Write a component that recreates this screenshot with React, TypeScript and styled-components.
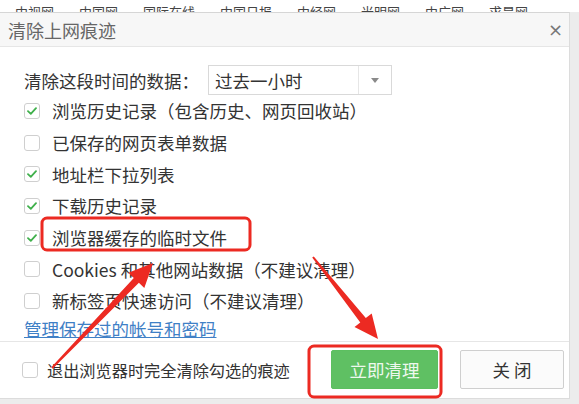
import React from "react";
import styled, { createGlobalStyle } from "styled-components";

const CJK = `"Noto Sans CJK SC", "Noto Sans", sans-serif`;

const GlobalStyle = createGlobalStyle`
  html, body {
    margin: 0;
    padding: 0;
    background: #ececec;
    font-family: ${CJK};
  }
`;

const navLinks = ["中视网", "中国网", "国际在线", "中国日报", "中经网", "光明网", "中广网", "求是网"];

const options = [
  { label: "浏览历史记录（包含历史、网页回收站）", checked: true },
  { label: "已保存的网页表单数据", checked: false },
  { label: "地址栏下拉列表", checked: true },
  { label: "下载历史记录", checked: true },
  { label: "浏览器缓存的临时文件", checked: true },
  { label: "Cookies 和其他网站数据（不建议清理）", checked: false },
  { label: "新标签页快速访问（不建议清理）", checked: false },
];

// polygon for a tapered annotation arrow from tail to tip
const arrowPoints = (tx: number, ty: number, px: number, py: number) => {
  const dx = px - tx;
  const dy = py - ty;
  const len = Math.hypot(dx, dy);
  const ux = dx / len;
  const uy = dy / len;
  const nx = -uy;
  const ny = ux;
  const headLen = 24;
  const headW = 11;
  const bx = px - ux * headLen;
  const by = py - uy * headLen;
  const pts = [
    [tx + nx * 1, ty + ny * 1],
    [bx + nx * 3.5, by + ny * 3.5],
    [bx + nx * headW, by + ny * headW],
    [px, py],
    [bx - nx * headW, by - ny * headW],
    [bx - nx * 3.5, by - ny * 3.5],
    [tx - nx * 1, ty - ny * 1],
  ];
  return pts.map(([x, y]) => `${x.toFixed(1)},${y.toFixed(1)}`).join(" ");
};

const CheckMark = () => (
  <svg width="10" height="8" viewBox="0 0 10 8">
    <path d="M1 4.2 L3.8 6.8 L9 1.2" fill="none" stroke="#3fb04b" strokeWidth="1.8" strokeLinecap="round" strokeLinejoin="round" />
  </svg>
);

const Checkbox = ({ checked }: { checked: boolean }) => (
  <Box>{checked && <CheckMark />}</Box>
);

const App = () => {
  return (
    <>
      <GlobalStyle />
      <Page>
        <NavStrip>
          {navLinks.map((n) => (
            <NavLink key={n}>{n}</NavLink>
          ))}
        </NavStrip>
        <Dialog>
          <Header>
            <Title>清除上网痕迹</Title>
            <Close>×</Close>
          </Header>
          <Body>
            <RangeRow>
              <span>清除这段时间的数据：</span>
              <Select>
                <SelectValue>过去一小时</SelectValue>
                <SelectArrow>
                  <svg width="8" height="5" viewBox="0 0 8 5">
                    <path d="M0 0 H8 L4 5 Z" fill="#8a8a8a" />
                  </svg>
                </SelectArrow>
              </Select>
            </RangeRow>
            {options.map((o) => (
              <OptionRow key={o.label}>
                <Checkbox checked={o.checked} />
                <span>{o.label}</span>
              </OptionRow>
            ))}
            <LinkRow>
              <Link href="#">管理保存过的帐号和密码</Link>
            </LinkRow>
          </Body>
          <Footer>
            <ExitOption>
              <Checkbox checked={false} />
              <span>退出浏览器时完全清除勾选的痕迹</span>
            </ExitOption>
            <Buttons>
              <Button $primary>立即清理</Button>
              <Button>关 闭</Button>
            </Buttons>
          </Footer>
        </Dialog>
        <Annotations width="579" height="404" viewBox="0 0 579 404">
          <rect x="42" y="218" width="208" height="32" rx="5" fill="none" stroke="#ec2a22" strokeWidth="3" />
          <rect x="309" y="346" width="132" height="51" rx="5" fill="none" stroke="#ec2a22" strokeWidth="3" />
          <polygon points={arrowPoints(52, 368, 153, 263)} fill="#ec2a22" />
          <polygon points={arrowPoints(313, 257, 378, 339)} fill="#ec2a22" />
        </Annotations>
      </Page>
    </>
  );
};

export default App;

const Page = styled.div`
  position: relative;
  width: 579px;
  height: 404px;
  overflow: hidden;
  background: #ececec;
`;

const NavStrip = styled.div`
  display: flex;
  gap: 25px;
  height: 12px;
  padding-left: 15px;
  background: #fff;
  overflow: hidden;
`;

const NavLink = styled.span`
  font-size: 13px;
  line-height: 13px;
  margin-top: 5px;
  color: #444;
  white-space: nowrap;
`;

const Dialog = styled.div`
  width: 569px;
  display: flex;
  flex-direction: column;
  background: #fff;
  border-top: 1px solid #d6d6d6;
  border-right: 1px solid #dcdcdc;
  border-bottom: 1px solid #dcdcdc;
`;

const Header = styled.div`
  display: flex;
  align-items: center;
  justify-content: space-between;
  flex: none;
  height: 33px;
  padding: 0 8px;
  background: #f7f7f7;
  border-bottom: 1px solid #e6e6e6;
`;

const Title = styled.span`
  font-size: 18px;
  color: #666;
`;

const Close = styled.span`
  font-family: "DejaVu Sans", sans-serif;
  font-size: 18px;
  color: #777;
  margin-right: -2px;
`;

const Body = styled.div`
  display: flex;
  flex-direction: column;
  flex: none;
  padding: 18px 0 0 24px;
  font-size: 17.5px;
  color: #333;
`;

const RangeRow = styled.div`
  display: flex;
  align-items: center;
  flex: none;
  gap: 9px;
  height: 30px;
`;

const Select = styled.div`
  display: flex;
  align-items: center;
  width: 184px;
  height: 30px;
  box-sizing: border-box;
  border: 1px solid #d9d9d9;
  background: #fff;
`;

const SelectValue = styled.span`
  flex: 1;
  padding-left: 6px;
  color: #333;
`;

const SelectArrow = styled.span`
  display: flex;
  align-items: center;
  justify-content: center;
  width: 32px;
  height: 100%;
  border-left: 1px solid #e6e6e6;
`;

const OptionRow = styled.div`
  display: flex;
  align-items: center;
  flex: none;
  gap: 12px;
  height: 31.7px;
`;

const Box = styled.span`
  display: inline-flex;
  align-items: center;
  justify-content: center;
  flex: none;
  width: 16px;
  height: 16px;
  box-sizing: border-box;
  border: 1px solid #cfcfcf;
  border-radius: 3px;
  background: #fff;
`;

const LinkRow = styled.div`
  display: flex;
  align-items: center;
  flex: none;
  height: 24px;
`;

const Link = styled.a`
  color: #3f80c6;
  text-decoration: underline;
  font-size: 17.5px;
`;

const Footer = styled.div`
  display: flex;
  align-items: center;
  justify-content: space-between;
  flex: none;
  height: 56px;
  padding: 0 5px 0 22px;
  border-top: 1px solid #e6e6e6;
  background: #fff;
`;

const ExitOption = styled.div`
  display: flex;
  align-items: center;
  gap: 9px;
  font-size: 16.2px;
  color: #333;
`;

const Buttons = styled.div`
  display: flex;
  gap: 22px;
`;

const Button = styled.button<{ $primary?: boolean }>`
  width: ${(p) => (p.$primary ? "107px" : "104px")};
  height: 39px;
  font-family: ${CJK};
  font-size: 17.5px;
  border-radius: 2px;
  border: 1px solid ${(p) => (p.$primary ? "#5cbf60" : "#cfcfcf")};
  background: ${(p) => (p.$primary ? "#5fc063" : "#fbfbfb")};
  color: ${(p) => (p.$primary ? "#eef8ee" : "#333")};
  padding: 0;
`;

const Annotations = styled.svg`
  position: absolute;
  top: 0;
  left: 0;
  pointer-events: none;
`;
